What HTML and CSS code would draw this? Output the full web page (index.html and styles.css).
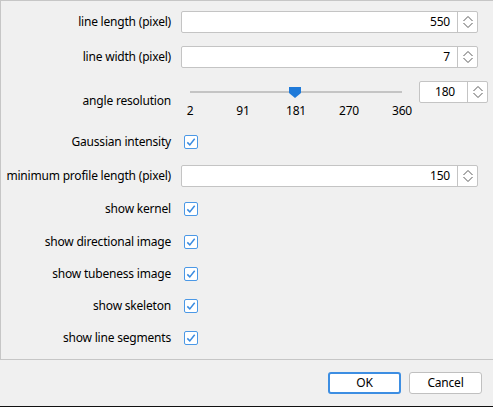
FILE: index.html
```html
<!DOCTYPE html>
<html>
<head>
<meta charset="utf-8">
<link rel="stylesheet" href="styles.css">
</head>
<body>
<div class="dialog">
  <div class="panel">
    <div class="form">
      <div class="lbl">line length (pixel)</div>
      <div class="spin wide"><span class="val">550</span><span class="arrows"><svg width="10" height="12" viewBox="0 0 10 12"><path d="M0.5 5 L5 0.5 L9.5 5 M0.5 7 L5 11.5 L9.5 7" fill="none" stroke="#5a5a5a" stroke-width="1"/></svg></span></div>

      <div class="lbl">line width (pixel)</div>
      <div class="spin wide"><span class="val">7</span><span class="arrows"><svg width="10" height="12" viewBox="0 0 10 12"><path d="M0.5 5 L5 0.5 L9.5 5 M0.5 7 L5 11.5 L9.5 7" fill="none" stroke="#5a5a5a" stroke-width="1"/></svg></span></div>

      <div class="lbl">angle resolution</div>
      <div class="angle">
        <div class="slider">
          <div class="groove">
            <svg class="handle" style="left: 105.4px" width="12" height="11" viewBox="0 0 12 11"><path d="M0 0 H12 V6 L6 11 L0 6 Z" fill="#1f7ad9"/></svg>
          </div>
          <div class="ticks"><span>2</span><span>91</span><span>181</span><span>270</span><span>360</span></div>
        </div>
        <div class="spin small"><span class="val">180</span><span class="arrows"><svg width="10" height="12" viewBox="0 0 10 12"><path d="M0.5 5 L5 0.5 L9.5 5 M0.5 7 L5 11.5 L9.5 7" fill="none" stroke="#5a5a5a" stroke-width="1"/></svg></span></div>
      </div>

      <div class="lbl">Gaussian intensity</div>
      <div class="check"><svg width="14" height="14" viewBox="0 0 14 14"><rect x="0.5" y="0.5" width="13" height="13" rx="1.5" fill="#fff" stroke="#4b98e6"/><path d="M3.3 7.4 L5.8 9.9 L10.7 3.8" fill="none" stroke="#3a8be0" stroke-width="1.5"/></svg></div>

      <div class="lbl">minimum profile length (pixel)</div>
      <div class="spin wide"><span class="val">150</span><span class="arrows"><svg width="10" height="12" viewBox="0 0 10 12"><path d="M0.5 5 L5 0.5 L9.5 5 M0.5 7 L5 11.5 L9.5 7" fill="none" stroke="#5a5a5a" stroke-width="1"/></svg></span></div>

      <div class="lbl">show kernel</div>
      <div class="check"><svg width="14" height="14" viewBox="0 0 14 14"><rect x="0.5" y="0.5" width="13" height="13" rx="1.5" fill="#fff" stroke="#4b98e6"/><path d="M3.3 7.4 L5.8 9.9 L10.7 3.8" fill="none" stroke="#3a8be0" stroke-width="1.5"/></svg></div>

      <div class="lbl">show directional image</div>
      <div class="check"><svg width="14" height="14" viewBox="0 0 14 14"><rect x="0.5" y="0.5" width="13" height="13" rx="1.5" fill="#fff" stroke="#4b98e6"/><path d="M3.3 7.4 L5.8 9.9 L10.7 3.8" fill="none" stroke="#3a8be0" stroke-width="1.5"/></svg></div>

      <div class="lbl">show tubeness image</div>
      <div class="check"><svg width="14" height="14" viewBox="0 0 14 14"><rect x="0.5" y="0.5" width="13" height="13" rx="1.5" fill="#fff" stroke="#4b98e6"/><path d="M3.3 7.4 L5.8 9.9 L10.7 3.8" fill="none" stroke="#3a8be0" stroke-width="1.5"/></svg></div>

      <div class="lbl">show skeleton</div>
      <div class="check"><svg width="14" height="14" viewBox="0 0 14 14"><rect x="0.5" y="0.5" width="13" height="13" rx="1.5" fill="#fff" stroke="#4b98e6"/><path d="M3.3 7.4 L5.8 9.9 L10.7 3.8" fill="none" stroke="#3a8be0" stroke-width="1.5"/></svg></div>

      <div class="lbl">show line segments</div>
      <div class="check"><svg width="14" height="14" viewBox="0 0 14 14"><rect x="0.5" y="0.5" width="13" height="13" rx="1.5" fill="#fff" stroke="#4b98e6"/><path d="M3.3 7.4 L5.8 9.9 L10.7 3.8" fill="none" stroke="#3a8be0" stroke-width="1.5"/></svg></div>
    </div>
  </div>
  <div class="buttons">
    <button class="btn primary">OK</button>
    <button class="btn">Cancel</button>
  </div>
  <div class="edge"></div>
</div>
</body>
</html>
```

FILE: styles.css
```css
html, body {
  margin: 0;
  padding: 0;
  background: #f0f0f0;
  overflow: hidden;
}

body {
  font-family: "Noto Sans", "Open Sans", sans-serif;
  font-size: 12px;
  letter-spacing: -0.2px;
  color: #000;
}

.dialog {
  width: 493px;
  height: 407px;
  display: flex;
  flex-direction: column;
}

.panel {
  width: 500px;
  box-sizing: border-box;
  border: 1px solid #c6c6c6;
  border-right: none;
  padding: 6px 0 5px 0;
}

.form {
  display: grid;
  grid-template-columns: 170px auto;
  grid-template-rows: 30px 40px 48px 34px 33px 34px 32px 32px 32px 32px;
  column-gap: 10px;
  align-items: center;
  justify-content: start;
}

.lbl {
  text-align: right;
  white-space: nowrap;
  line-height: 16px;
}

.spin {
  display: flex;
  height: 22px;
  box-sizing: border-box;
  border: 1px solid #c4c4c4;
  border-radius: 2px;
  background: #fff;
}

.spin.wide {
  width: 297px;
}

.spin.small {
  width: 69px;
}

.val {
  flex: 1;
  text-align: right;
  padding-right: 7px;
  line-height: 20px;
}

.spin.small .val {
  padding-right: 12px;
}

.arrows {
  width: 19px;
  border-left: 1px solid #c4c4c4;
  display: flex;
  align-items: center;
  justify-content: center;
}

.angle {
  align-self: start;
  padding-top: 4px;
  display: flex;
  gap: 8px;
}

.slider {
  width: 230px;
}

.groove {
  position: relative;
  margin: 10px 9px 0 9px;
  height: 2px;
  background: #c4c4c4;
}

.handle {
  position: absolute;
  top: -4px;
  margin-left: -6px;
}

.ticks {
  margin: 11px 9px 0 9px;
  display: flex;
  justify-content: space-between;
  line-height: 14px;
}

.ticks span {
  width: 0;
  display: flex;
  justify-content: center;
  white-space: nowrap;
}

.check {
  display: flex;
  padding-left: 3px;
}

.check svg {
  display: block;
}

.buttons {
  display: flex;
  justify-content: flex-end;
  gap: 8px;
  padding: 12px 11px 0 0;
  height: 34px;
}

.btn {
  width: 73px;
  height: 22px;
  box-sizing: border-box;
  background: #fff;
  border: 1px solid #c0c0c0;
  border-radius: 3px;
  font-family: "Noto Sans", "Open Sans", sans-serif;
  font-size: 12px;
  letter-spacing: -0.2px;
  color: #000;
  padding: 0;
  line-height: 18px;
}

.btn.primary {
  border: 2px solid #3d8ee2;
}

.edge {
  height: 1px;
  background: #111;
}
```
